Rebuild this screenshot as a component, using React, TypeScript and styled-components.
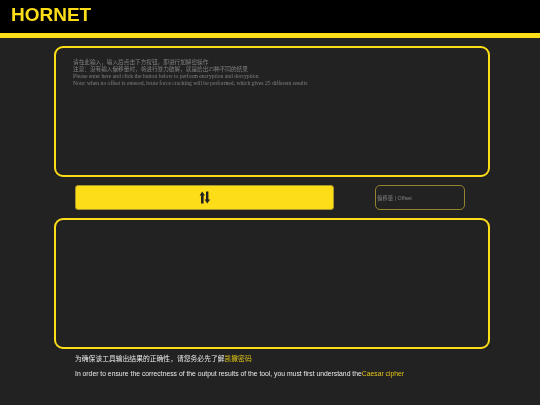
import styled, { createGlobalStyle } from "styled-components";

const GlobalStyle = createGlobalStyle`
  html, body {
    margin: 0;
    padding: 0;
    background: #222222;
  }
  * {
    box-sizing: border-box;
  }
`;

const Header = styled.header`
  height: 38px;
  background: #000;
  border-bottom: 5px solid #fddd17;
  padding: 3px 0 0 11px;
`;

const Logo = styled.h1`
  margin: 0;
  font: bold 19px/24px "Liberation Sans", Arial, sans-serif;
  color: #fddd17;
  will-change: transform;
`;

const Main = styled.main`
  width: 436px;
  margin: 8px 0 0 54px;
  display: flex;
  flex-direction: column;
  gap: 8px;
`;

const Panel = styled.div`
  height: 131px;
  border: 2px solid #fddd17;
  border-radius: 9px;
  padding: 10.5px 17px;
`;

const Hint = styled.div`
  font-family: "Liberation Serif", "Noto Sans CJK SC", serif;
  font-size: 5.65px;
  line-height: 7px;
  color: #808080;
  white-space: nowrap;
  will-change: transform;
`;

const Controls = styled.div`
  display: flex;
  height: 25px;
  padding: 0 25px 0 21px;
  justify-content: space-between;
`;

const SwapButton = styled.button`
  width: 259px;
  height: 25px;
  border: 1px solid #a8962a;
  border-radius: 3px;
  background: #fddd17;
  padding: 0;
  display: flex;
  align-items: center;
  justify-content: center;
  color: #222;
`;

const Offset = styled.div`
  width: 90px;
  height: 25px;
  border: 1.5px solid #94852c;
  border-radius: 5px;
  padding: 0 1px;
  display: flex;
  align-items: center;
  font: 5.4px "Liberation Sans", "Noto Sans CJK SC", sans-serif;
  color: #808080;
`;

const OffsetLabel = styled.span`
  will-change: transform;
`;

const Notes = styled.div`
  margin: 5px 0 0 75px;
  font: 6.8px/10px "Liberation Sans", "Noto Sans CJK SC", sans-serif;
  color: #e8e8e8;
  white-space: nowrap;
  display: flex;
  flex-direction: column;
  gap: 5px;
  will-change: transform;
`;

const Link = styled.a`
  color: #e0c318;
`;

export default function App() {
  return (
    <>
      <GlobalStyle />
      <Header>
        <Logo>HORNET</Logo>
      </Header>
      <Main>
        <Panel>
          <Hint>请在此输入，输入后点击下方按钮，即进行加解密操作</Hint>
          <Hint>注意：没有输入偏移量时，将进行暴力破解，就是给出25种不同的结果</Hint>
          <Hint>Please enter here and click the button below to perform encryption and decryption</Hint>
          <Hint>Note: when no offset is entered, brute force cracking will be performed, which gives 25 different results</Hint>
        </Panel>
        <Controls>
          <SwapButton>
            <svg width="12" height="13" viewBox="0 0 12 13" fill="currentColor">
              <path d="M3.2 0.5 L6 4.5 H4.6 V12.5 H2 V4.5 H0.6 Z" />
              <path d="M7 0.5 H9.4 V8.5 H11.2 L8.2 12.5 L5.6 8.5 H7 Z" />
            </svg>
          </SwapButton>
          <Offset>
            <OffsetLabel>偏移量 | Offset</OffsetLabel>
          </Offset>
        </Controls>
        <Panel />
      </Main>
      <Notes>
        <div>
          为确保该工具输出结果的正确性，请您务必先了解<Link>凯撒密码</Link>
        </div>
        <div>
          In order to ensure the correctness of the output results of the tool, you must first understand the
          <Link>Caesar cipher</Link>
        </div>
      </Notes>
    </>
  );
}
